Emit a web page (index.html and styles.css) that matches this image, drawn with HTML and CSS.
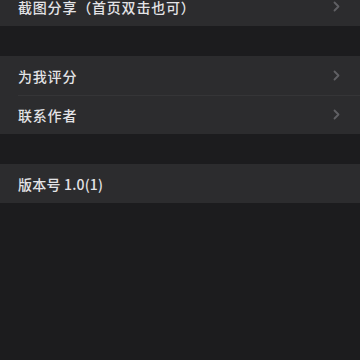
FILE: index.html
```html
<!DOCTYPE html>
<html>
<head>
<meta charset="UTF-8">
<meta name="viewport" content="width=device-width, initial-scale=1.0">
<title>设置</title>
<link rel="stylesheet" href="styles.css">
</head>
<body>

<div class="page">

<div class="group">
  <div class="row">
    <span class="label">截图分享（首页双击也可）</span>
    <svg class="chevron" width="7" height="11" viewBox="0 0 7 11"><path d="M1.5 1.5l4 4-4 4" fill="none" stroke="currentColor" stroke-width="1.8" stroke-linecap="round" stroke-linejoin="round"/></svg>
  </div>
</div>

<div class="group">
  <div class="row">
    <span class="label">为我评分</span>
    <svg class="chevron" width="7" height="11" viewBox="0 0 7 11"><path d="M1.5 1.5l4 4-4 4" fill="none" stroke="currentColor" stroke-width="1.8" stroke-linecap="round" stroke-linejoin="round"/></svg>
  </div>
  <div class="row">
    <span class="label">联系作者</span>
    <svg class="chevron" width="7" height="11" viewBox="0 0 7 11"><path d="M1.5 1.5l4 4-4 4" fill="none" stroke="currentColor" stroke-width="1.8" stroke-linecap="round" stroke-linejoin="round"/></svg>
  </div>
</div>

<div class="group">
  <div class="row">
    <span class="label version">版本号 1.0(1)</span>
  </div>
</div>

</div>

</body>
</html>
```

FILE: styles.css
```css
html, body{
    margin:0;
    height:100%;
    background:#1c1c1e;
    overflow:hidden;
}

.page{
    margin-top:-13px;
    display:flex;
    flex-direction:column;
    gap:30px;
    font-family:"Noto Sans CJK SC", "Noto Sans", sans-serif;
}

.group{
    background:#2c2c2e;
}

.row{
    height:39px;
    display:flex;
    align-items:center;
    justify-content:space-between;
    padding:0 20px 0 18px;
    position:relative;
}

.row + .row::before{
    content:"";
    position:absolute;
    top:0;
    left:18px;
    right:0;
    height:1px;
    background:#353537;
}

.label{
    color:#e3e3e6;
    font-size:14px;
    font-weight:500;
    letter-spacing:0.8px;
}

.version{
    letter-spacing:0.2px;
}

.chevron{
    color:#606064;
}
```
